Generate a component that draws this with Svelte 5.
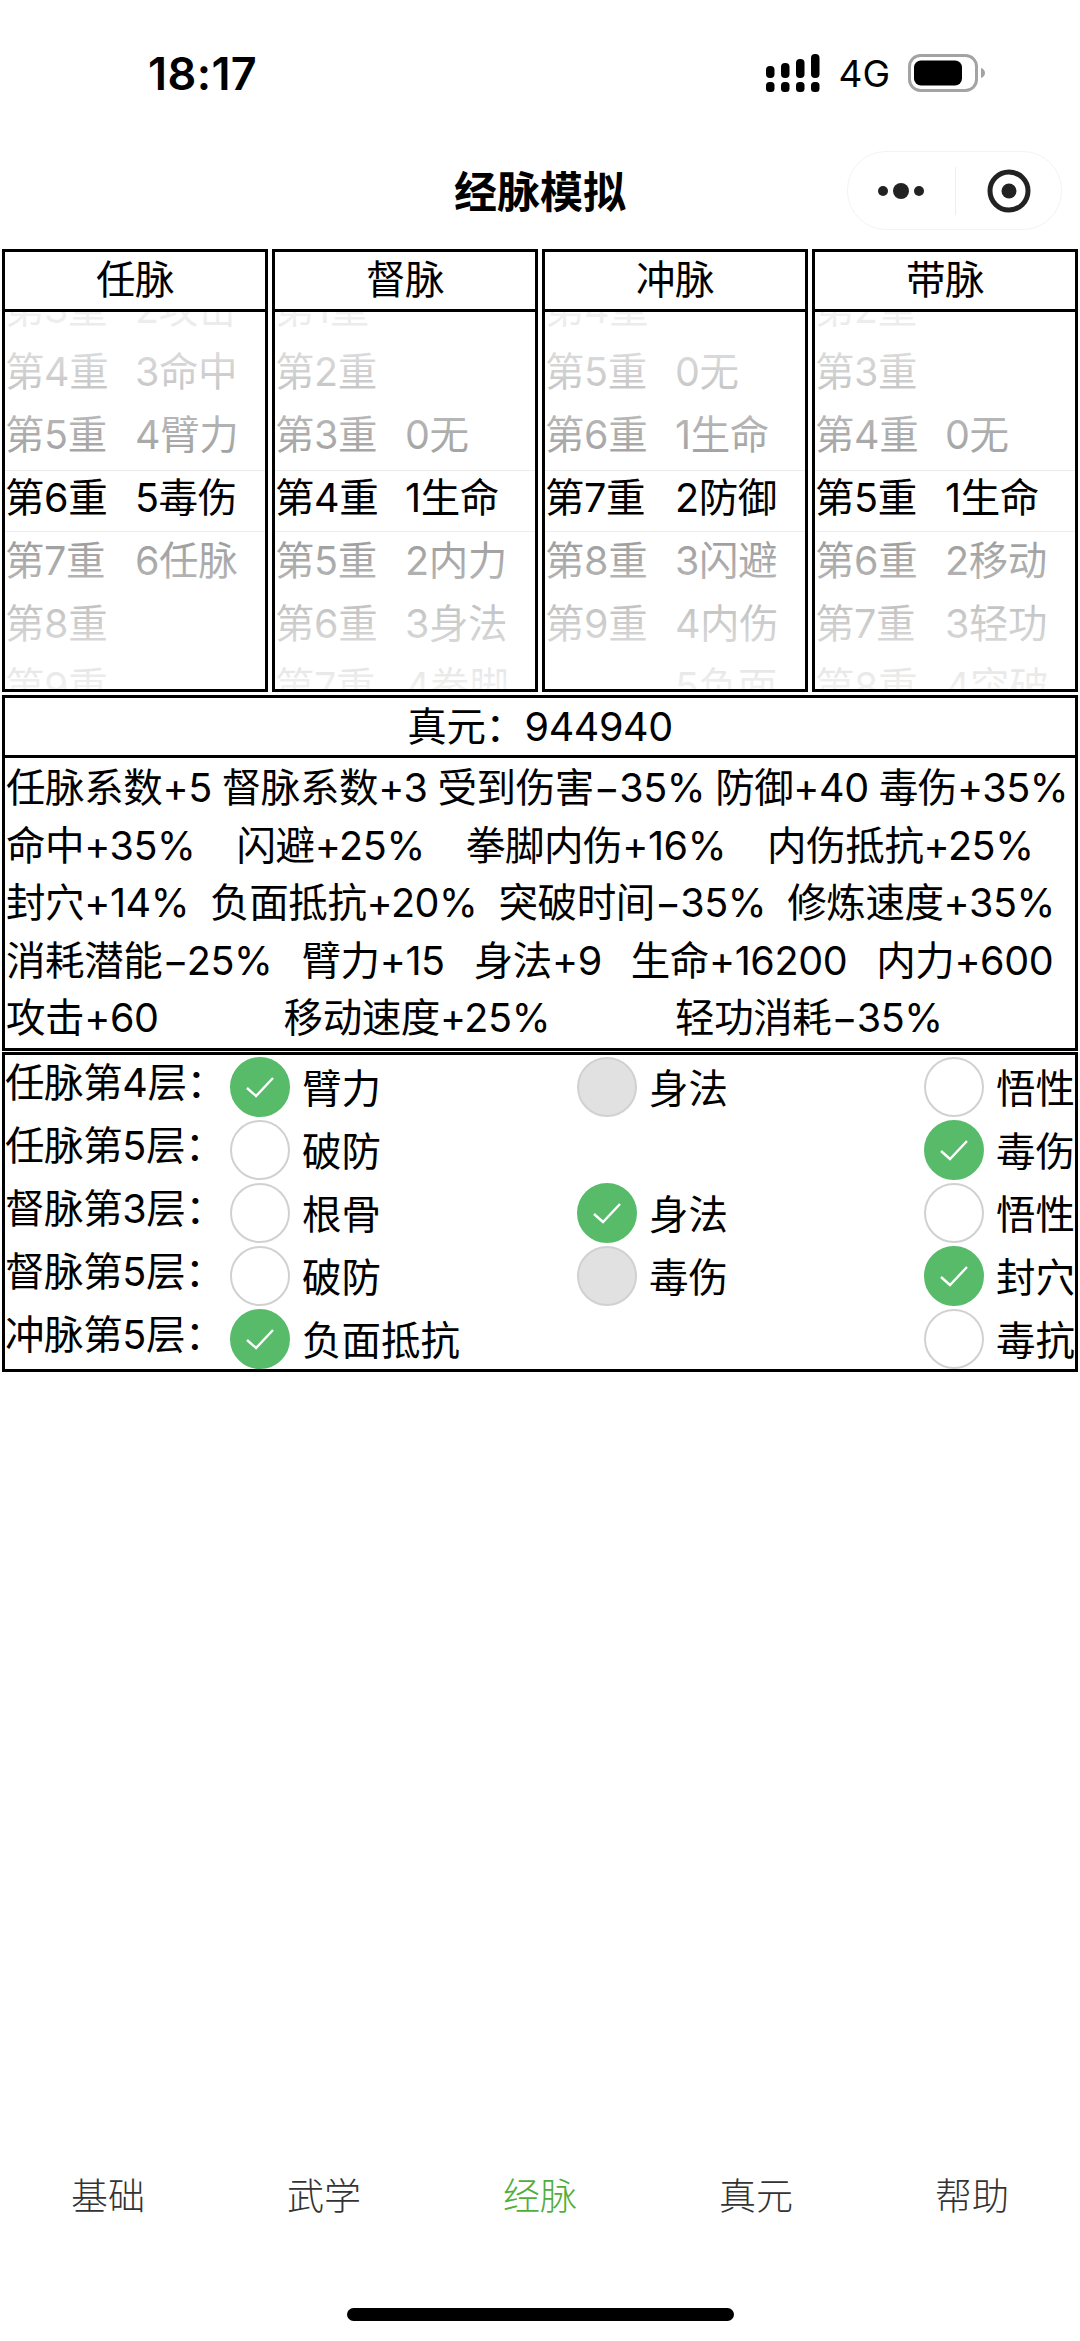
<script lang="ts">
  const columns = [
    {
      name: '任脉',
      rows: [['第3重', '2攻击'], ['第4重', '3命中'], ['第5重', '4臂力'], ['第6重', '5毒伤'], ['第7重', '6任脉'], ['第8重', ''], ['第9重', '']]
    },
    {
      name: '督脉',
      rows: [['第1重', ''], ['第2重', ''], ['第3重', '0无'], ['第4重', '1生命'], ['第5重', '2内力'], ['第6重', '3身法'], ['第7重', '4拳脚']]
    },
    {
      name: '冲脉',
      rows: [['第4重', ''], ['第5重', '0无'], ['第6重', '1生命'], ['第7重', '2防御'], ['第8重', '3闪避'], ['第9重', '4内伤'], ['', '5负面']]
    },
    {
      name: '带脉',
      rows: [['第2重', ''], ['第3重', ''], ['第4重', '0无'], ['第5重', '1生命'], ['第6重', '2移动'], ['第7重', '3轻功'], ['第8重', '4突破']]
    }
  ];

  const effects = [
    ['任脉系数+5', '督脉系数+3', '受到伤害−35%', '防御+40', '毒伤+35%'],
    ['命中+35%', '闪避+25%', '拳脚内伤+16%', '内伤抵抗+25%'],
    ['封穴+14%', '负面抵抗+20%', '突破时间−35%', '修炼速度+35%'],
    ['消耗潜能−25%', '臂力+15', '身法+9', '生命+16200', '内力+600'],
    ['攻击+60', '移动速度+25%', '轻功消耗−35%']
  ];

  const talents = [
    { label: '任脉第4层：', options: [['臂力', 'on'], ['身法', 'off'], ['悟性', '']] },
    { label: '任脉第5层：', options: [['破防', ''], ['毒伤', 'on']] },
    { label: '督脉第3层：', options: [['根骨', ''], ['身法', 'on'], ['悟性', '']] },
    { label: '督脉第5层：', options: [['破防', ''], ['毒伤', 'off'], ['封穴', 'on']] },
    { label: '冲脉第5层：', options: [['负面抵抗', 'on'], ['毒抗', '']] }
  ];

  const tabs = ['基础', '武学', '经脉', '真元', '帮助'];
</script>

<div class="page">
  <div class="status">
    <span class="time">18:17</span>
    <div class="status-right">
      <svg width="54" height="38" viewBox="0 0 54 38">
        <rect x="0" y="28" width="8.500" height="10" rx="3.500" />
        <rect x="15" y="28" width="8.500" height="10" rx="3.500" />
        <rect x="30" y="28" width="8.500" height="10" rx="3.500" />
        <rect x="45" y="28" width="8.500" height="10" rx="3.500" />
        <rect x="0" y="12" width="8.500" height="12" rx="4" />
        <rect x="15" y="9" width="8.500" height="15" rx="4" />
        <rect x="30" y="5" width="8.500" height="19" rx="4" />
        <rect x="45" y="0" width="8.500" height="24" rx="4" />
      </svg>
      <span class="net">4G</span>
      <svg width="78" height="38" viewBox="0 0 78 38">
        <rect x="1.500" y="1.500" width="67" height="35" rx="11" fill="none" stroke="#a3a3a3" stroke-width="3" />
        <rect x="6" y="6.500" width="48" height="25" rx="7" fill="#000" />
        <path d="M73 14c2.500 1 4 2.500 4 5s-1.500 4-4 5z" fill="#a3a3a3" />
      </svg>
    </div>
  </div>

  <div class="nav">
    <span class="title">经脉模拟</span>
    <div class="capsule">
      <svg width="52" height="24" viewBox="0 0 52 24">
        <circle cx="8" cy="12" r="5" fill="#222" />
        <circle cx="26" cy="12" r="8" fill="#222" />
        <circle cx="44" cy="12" r="5" fill="#222" />
      </svg>
      <span class="capsule-line"></span>
      <svg width="46" height="46" viewBox="0 0 46 46">
        <circle cx="23" cy="23" r="19" fill="none" stroke="#222" stroke-width="5" />
        <circle cx="23" cy="23" r="7.500" fill="#222" />
      </svg>
    </div>
  </div>

  <div class="pickers">
    {#each columns as col}
      <div class="col">
        <div class="col-head">{col.name}</div>
        <div class="picker">
          {#each col.rows as row, i}
            <div class="row" class:active={i === 3}>
              <span>{row[0]}</span>
              <span>{row[1]}</span>
            </div>
          {/each}
          <div class="indicator"></div>
          <div class="mask top"></div>
          <div class="mask bottom"></div>
        </div>
      </div>
    {/each}
  </div>

  <div class="box">
    <div class="energy">真元：944940</div>
    <div class="effects">
      {#each effects as line}
        <div class="effect-line">
          {#each line as item}
            <span>{item}</span>
          {/each}
        </div>
      {/each}
    </div>
  </div>

  <div class="box talents">
    {#each talents as t}
      <div class="talent">
        <span class="talent-label">{t.label}</span>
        <div class="radios">
          {#each t.options as opt}
            <div class="radio">
              <span class="dot {opt[1]}">
                {#if opt[1] === 'on'}
                  <svg width="30" height="22" viewBox="0 0 30 22">
                    <path d="M2 12 L11 20 L28 2" fill="none" stroke="#fff" stroke-width="2.400" />
                  </svg>
                {/if}
              </span>
              <span class="opt">{opt[0]}</span>
            </div>
          {/each}
        </div>
      </div>
    {/each}
  </div>

  <div class="spacer"></div>

  <div class="tabs">
    {#each tabs as tab}
      <div class="tab" class:current={tab === '经脉'}>{tab}</div>
    {/each}
  </div>
  <div class="home-wrap"><div class="home"></div></div>
</div>

<style>
  :global(body) {
    margin: 0;
    background: #fff;
  }

  .page {
    display: flex;
    flex-direction: column;
    height: 2341px;
    box-sizing: border-box;
    padding-top: 44px;
    overflow: hidden;
    color: #000;
    font-family: Inter, 'Noto Sans CJK SC', sans-serif;
    font-size: 39.500px;
    letter-spacing: -0.4px;
  }

  .status {
    display: flex;
    justify-content: space-between;
    align-items: center;
    height: 58px;
    padding: 0 94px 0 148px;
  }

  .time {
    font-size: 45px;
    font-weight: 600;
    letter-spacing: 0.4px;
  }

  .status-right {
    display: flex;
    align-items: center;
    gap: 18px;
  }

  .net {
    font-size: 37px;
    font-weight: 400;
    letter-spacing: 0;
  }

  .nav {
    position: relative;
    display: flex;
    justify-content: center;
    align-items: center;
    height: 79px;
    margin-top: 49px;
    margin-bottom: 19px;
  }

  .title {
    margin-top: -3px;
    font-size: 43px;
    font-weight: 700;
    letter-spacing: 0;
  }

  .capsule {
    position: absolute;
    right: 18px;
    top: 0;
    display: flex;
    align-items: center;
    width: 215px;
    height: 79px;
    box-sizing: border-box;
    padding-left: 27px;
    border: 1px solid #f3f3f3;
    border-radius: 39px;
  }

  .capsule-line {
    width: 1px;
    height: 48px;
    margin: 0 30px 0 28px;
    background: #eee;
  }

  .pickers {
    display: flex;
  }

  .col {
    flex: 1;
    display: flex;
    flex-direction: column;
    height: 443px;
    margin: 0 2px;
    box-sizing: border-box;
    border: 3px solid #000;
  }

  .col-head {
    height: 60px;
    line-height: 56px;
    text-align: center;
    border-bottom: 3px solid #000;
    box-sizing: border-box;
  }

  .picker {
    position: relative;
    flex: 1;
    display: flex;
    flex-direction: column;
    justify-content: center;
    overflow: hidden;
  }

  .row {
    flex: none;
    display: grid;
    grid-template-columns: 1fr 1fr;
    height: 63px;
    line-height: 58px;
    white-space: nowrap;
  }

  .indicator {
    position: absolute;
    left: 0;
    right: 0;
    top: calc(50% - 31px);
    height: 62px;
    box-sizing: border-box;
    border-top: 1px solid #ececec;
    border-bottom: 1px solid #ececec;
  }

  .mask {
    position: absolute;
    left: 0;
    right: 0;
    height: calc(50% - 31px);
  }

  .mask.top {
    top: 0;
    background: linear-gradient(180deg, rgba(255, 255, 255, 0.95), rgba(255, 255, 255, 0.6));
  }

  .mask.bottom {
    bottom: 0;
    background: linear-gradient(0deg, rgba(255, 255, 255, 0.95), rgba(255, 255, 255, 0.6));
  }

  .box {
    margin: 3px 2px 0;
    border: 3px solid #000;
  }

  .energy {
    height: 60px;
    line-height: 58px;
    text-align: center;
    border-bottom: 3px solid #000;
    box-sizing: border-box;
  }

  .effects {
    padding: 2px 0 0 1px;
  }

  .effect-line {
    display: flex;
    height: 57.500px;
    line-height: 57px;
    white-space: nowrap;
  }

  .effect-line:nth-child(1) {
    gap: 10px;
  }

  .effect-line:nth-child(2) {
    gap: 41px;
  }

  .effect-line:nth-child(3) {
    gap: 21px;
  }

  .effect-line:nth-child(4) {
    gap: 29px;
  }

  .effect-line:nth-child(5) {
    gap: 125px;
  }

  .talents {
    margin-top: 1px;
    padding: 2px 0 0 0;
  }

  .talent {
    display: flex;
    height: 63px;
  }

  .talent:last-child {
    height: 60px;
  }

  .talent-label {
    width: 225px;
    line-height: 52px;
    white-space: nowrap;
  }

  .radios {
    flex: 1;
    display: flex;
    justify-content: space-between;
    align-items: flex-start;
  }

  .radio {
    display: flex;
    align-items: center;
    gap: 12px;
    white-space: nowrap;
  }

  .opt {
    padding-bottom: 3px;
    letter-spacing: 0;
  }

  .dot {
    display: flex;
    align-items: center;
    justify-content: center;
    width: 60px;
    height: 60px;
    box-sizing: border-box;
    border: 2.500px solid #d1d1d1;
    border-radius: 50%;
    background: #fff;
  }

  .dot.on {
    border-color: #57bb6a;
    background: #57bb6a;
  }

  .dot.off {
    background: #e1e1e1;
  }

  .spacer {
    flex: 1;
  }

  .tabs {
    display: flex;
    height: 56px;
    margin-bottom: 83px;
  }

  .tab {
    flex: 1;
    text-align: center;
    line-height: 56px;
    font-size: 37px;
    font-weight: 300;
    letter-spacing: 0;
    color: #333;
  }

  .tab.current {
    color: #4fae3c;
  }

  .home-wrap {
    display: flex;
    justify-content: center;
    height: 33px;
  }

  .home {
    width: 387px;
    height: 13px;
    border-radius: 7px;
    background: #000;
  }
</style>
